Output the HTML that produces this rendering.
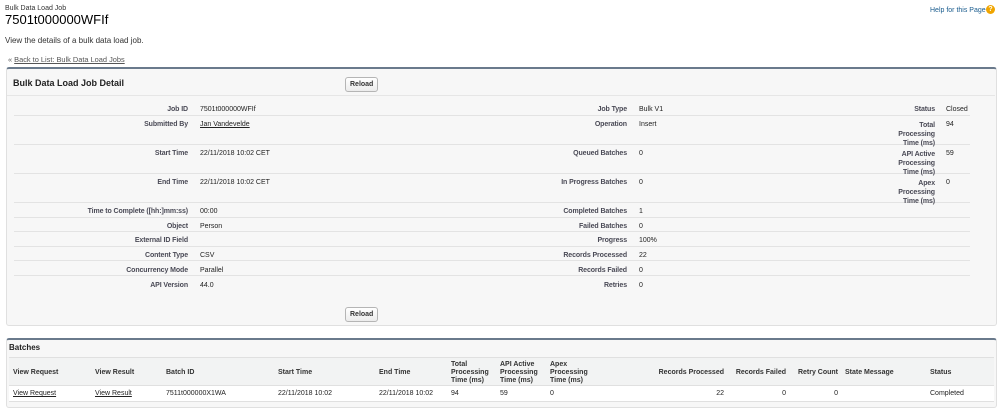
<!DOCTYPE html>
<html><head><style>
body{margin:0;width:1000px;height:411px;background:#fff;font-family:"Liberation Sans",Arial,sans-serif;color:#222;position:relative;overflow:hidden}
.a{position:absolute;white-space:nowrap}
.s{font-size:7px}
.lb{font-size:7px;color:#4a4a56;font-weight:bold;text-align:right;letter-spacing:-0.1px}
.v{font-size:7px;color:#222}
.u{text-decoration:underline}
.btn{position:absolute;border:1px solid #b5b5b5;border-radius:3px;background:linear-gradient(#fff,#ececec);font-size:7px;font-weight:bold;color:#333;padding:3px 4px;height:7px;line-height:7px}
.hl{position:absolute;height:1px;background:#e3e3e3}
.th{font-size:7px;font-weight:bold;color:#333;line-height:8px}
.r>div{margin-top:2px}
</style></head><body>
<div class="a s" style="left:5px;top:5px;color:#333">Bulk Data Load Job</div>
<div class="a" style="left:5px;top:12px;font-size:13px;color:#000">7501t000000WFIf</div>
<div class="a s" style="left:930px;top:7px;color:#1a5c8e">Help for this Page</div>
<div class="a" style="left:986px;top:5px;width:9px;height:9px;border-radius:50%;background:#f0a500;color:#fff;font-size:7px;font-weight:bold;text-align:center;line-height:9px">?</div>
<div class="a" style="left:5px;top:36px;font-size:8px;color:#333">View the details of a bulk data load job.</div>
<div class="a" style="left:8px;top:55px;color:#555;font-size:7.4px">« <span class="u">Back to List: Bulk Data Load Jobs</span></div>

<div class="a" style="left:6px;top:67px;width:989px;height:256px;background:#f7f7f7;border:1px solid #e0e0e0;border-top:2px solid #6a7a8c;border-radius:3px"></div>
<div class="a" style="left:13px;top:78px;font-size:9px;font-weight:bold;color:#222">Bulk Data Load Job Detail</div>
<div class="btn" style="left:345px;top:77px">Reload</div>
<div class="hl" style="left:7px;top:95px;width:988px;background:#e6e6e6"></div>

<div class="hl" style="left:14px;top:115px;width:956px"></div>
<div class="hl" style="left:14px;top:144px;width:956px"></div>
<div class="hl" style="left:14px;top:173px;width:956px"></div>
<div class="hl" style="left:14px;top:202px;width:956px"></div>
<div class="hl" style="left:14px;top:217px;width:956px"></div>
<div class="hl" style="left:14px;top:231px;width:956px"></div>
<div class="hl" style="left:14px;top:246px;width:956px"></div>
<div class="hl" style="left:14px;top:260px;width:956px"></div>
<div class="hl" style="left:14px;top:275px;width:956px"></div>

<div class="r">
<div class="a lb" style="right:812px;top:104px">Job ID</div><div class="a v" style="left:200px;top:104px">7501t000000WFIf</div>
<div class="a lb" style="right:812px;top:119px">Submitted By</div><div class="a v u" style="left:200px;top:119px">Jan Vandevelde</div>
<div class="a lb" style="right:812px;top:148px">Start Time</div><div class="a v" style="left:200px;top:148px">22/11/2018 10:02 CET</div>
<div class="a lb" style="right:812px;top:177px">End Time</div><div class="a v" style="left:200px;top:177px">22/11/2018 10:02 CET</div>
<div class="a lb" style="right:812px;top:206px">Time to Complete ([hh:]mm:ss)</div><div class="a v" style="left:200px;top:206px">00:00</div>
<div class="a lb" style="right:812px;top:221px">Object</div><div class="a v" style="left:200px;top:221px">Person</div>
<div class="a lb" style="right:812px;top:235px">External ID Field</div>
<div class="a lb" style="right:812px;top:250px">Content Type</div><div class="a v" style="left:200px;top:250px">CSV</div>
<div class="a lb" style="right:812px;top:265px">Concurrency Mode</div><div class="a v" style="left:200px;top:265px">Parallel</div>
<div class="a lb" style="right:812px;top:280px">API Version</div><div class="a v" style="left:200px;top:280px">44.0</div>

<div class="a lb" style="right:373px;top:104px">Job Type</div><div class="a v" style="left:639px;top:104px">Bulk V1</div>
<div class="a lb" style="right:373px;top:119px">Operation</div><div class="a v" style="left:639px;top:119px">Insert</div>
<div class="a lb" style="right:373px;top:148px">Queued Batches</div><div class="a v" style="left:639px;top:148px">0</div>
<div class="a lb" style="right:373px;top:177px">In Progress Batches</div><div class="a v" style="left:639px;top:177px">0</div>
<div class="a lb" style="right:373px;top:206px">Completed Batches</div><div class="a v" style="left:639px;top:206px">1</div>
<div class="a lb" style="right:373px;top:221px">Failed Batches</div><div class="a v" style="left:639px;top:221px">0</div>
<div class="a lb" style="right:373px;top:235px">Progress</div><div class="a v" style="left:639px;top:235px">100%</div>
<div class="a lb" style="right:373px;top:250px">Records Processed</div><div class="a v" style="left:639px;top:250px">22</div>
<div class="a lb" style="right:373px;top:265px">Records Failed</div><div class="a v" style="left:639px;top:265px">0</div>
<div class="a lb" style="right:373px;top:280px">Retries</div><div class="a v" style="left:639px;top:280px">0</div>

<div class="a lb" style="right:65px;top:104px">Status</div><div class="a v" style="left:946px;top:104px">Closed</div>
<div class="a lb" style="right:65px;top:119px;line-height:9px">Total<br>Processing<br>Time (ms)</div><div class="a v" style="left:946px;top:119px">94</div>
<div class="a lb" style="right:65px;top:148px;line-height:9px">API Active<br>Processing<br>Time (ms)</div><div class="a v" style="left:946px;top:148px">59</div>
<div class="a lb" style="right:65px;top:177px;line-height:9px">Apex<br>Processing<br>Time (ms)</div><div class="a v" style="left:946px;top:177px">0</div>
</div>

<div class="btn" style="left:345px;top:307px">Reload</div>

<div class="a" style="left:6px;top:338px;width:989px;height:67px;background:#f7f7f7;border:1px solid #e0e0e0;border-top:2px solid #6a7a8c;border-radius:3px"></div>
<div class="a" style="left:9px;top:343px;font-size:8px;font-weight:bold">Batches</div>
<div class="a" style="left:9px;top:357px;width:985px;height:28px;background:#f2f3f3;border-top:1px solid #e0e0e0"></div>
<div class="a" style="left:9px;top:385px;width:985px;height:15px;background:#fff;border-top:1px solid #e0e0e0;border-bottom:1px solid #e0e0e0"></div>
<div class="a th" style="left:13px;top:369px">View Request</div>
<div class="a th" style="left:95px;top:369px">View Result</div>
<div class="a th" style="left:166px;top:369px">Batch ID</div>
<div class="a th" style="left:278px;top:369px">Start Time</div>
<div class="a th" style="left:379px;top:369px">End Time</div>
<div class="a th" style="left:451px;top:361px">Total<br>Processing<br>Time (ms)</div>
<div class="a th" style="left:500px;top:361px">API Active<br>Processing<br>Time (ms)</div>
<div class="a th" style="left:550px;top:361px">Apex<br>Processing<br>Time (ms)</div>
<div class="a th" style="right:276px;top:369px">Records Processed</div>
<div class="a th" style="right:214px;top:369px">Records Failed</div>
<div class="a th" style="right:162px;top:369px">Retry Count</div>
<div class="a th" style="left:845px;top:369px">State Message</div>
<div class="a th" style="left:930px;top:369px">Status</div>

<div class="a v u" style="left:13px;top:390px">View Request</div>
<div class="a v u" style="left:95px;top:390px">View Result</div>
<div class="a v" style="left:166px;top:390px">7511t000000X1WA</div>
<div class="a v" style="left:278px;top:390px">22/11/2018 10:02</div>
<div class="a v" style="left:379px;top:390px">22/11/2018 10:02</div>
<div class="a v" style="left:451px;top:390px">94</div>
<div class="a v" style="left:500px;top:390px">59</div>
<div class="a v" style="left:550px;top:390px">0</div>
<div class="a v" style="right:276px;top:390px">22</div>
<div class="a v" style="right:214px;top:390px">0</div>
<div class="a v" style="right:162px;top:390px">0</div>
<div class="a v" style="left:930px;top:390px">Completed</div>
</body></html>
